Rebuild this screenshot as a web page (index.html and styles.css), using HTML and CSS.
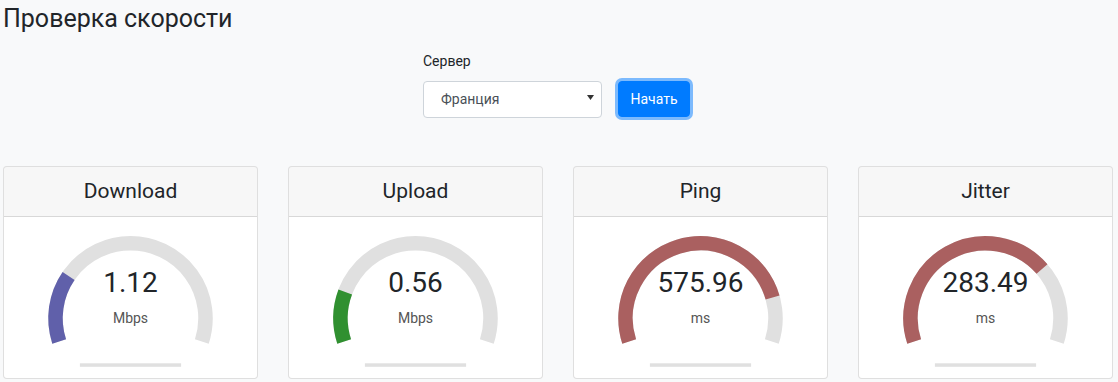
FILE: index.html
```
<!DOCTYPE html>
<html lang="ru">
<head>
<meta charset="utf-8">
<title>Проверка скорости</title>
<link rel="stylesheet" href="styles.css">
</head>
<body>
<div class="page">
  <h1 class="title">Проверка скорости</h1>
  <div class="controls">
    <div class="field">
      <label class="label">Сервер</label>
      <div class="select">
        <span class="select-text">Франция</span>
        <svg class="select-arrow" width="7" height="5" viewBox="0 0 7 5"><path d="M0 0H7L3.5 5Z" fill="#333"/></svg>
      </div>
    </div>
    <button class="btn">Начать</button>
  </div>
  <div class="cards">
    <div class="card">
      <div class="card-header">Download</div>
      <div class="card-body">
        <svg class="gauge" width="253" height="161" viewBox="0 0 253 161">
          <path d="M55.17 124.48 A75 75 0 1 1 197.83 124.48" class="arc-bg"/>
          <path d="M55.17 124.48 A75 75 0 0 1 64.58 58.97" stroke="#6060AA" class="arc-fg"/>
          <rect x="75.9" y="146.3" width="101.2" height="3.5" class="bar"/>
        </svg>
        <div class="readout"><div class="value">1.12</div><div class="unit">Mbps</div></div>
      </div>
    </div>
    <div class="card">
      <div class="card-header">Upload</div>
      <div class="card-body">
        <svg class="gauge" width="253" height="161" viewBox="0 0 253 161">
          <path d="M55.17 124.48 A75 75 0 1 1 197.83 124.48" class="arc-bg"/>
          <path d="M55.17 124.48 A75 75 0 0 1 56.25 75.02" stroke="#309030" class="arc-fg"/>
          <rect x="75.9" y="146.3" width="101.2" height="3.5" class="bar"/>
        </svg>
        <div class="readout"><div class="value">0.56</div><div class="unit">Mbps</div></div>
      </div>
    </div>
    <div class="card">
      <div class="card-header">Ping</div>
      <div class="card-body">
        <svg class="gauge" width="253" height="161" viewBox="0 0 253 161">
          <path d="M55.17 124.48 A75 75 0 1 1 197.83 124.48" class="arc-bg"/>
          <path d="M55.17 124.48 A75 75 0 1 1 198.57 80.55" stroke="#AA6060" class="arc-fg"/>
          <rect x="75.9" y="146.3" width="101.2" height="3.5" class="bar"/>
        </svg>
        <div class="readout"><div class="value">575.96</div><div class="unit">ms</div></div>
      </div>
    </div>
    <div class="card">
      <div class="card-header">Jitter</div>
      <div class="card-body">
        <svg class="gauge" width="253" height="161" viewBox="0 0 253 161">
          <path d="M55.17 124.48 A75 75 0 1 1 197.83 124.48" class="arc-bg"/>
          <path d="M55.17 124.48 A75 75 0 0 1 183.02 51.99" stroke="#AA6060" class="arc-fg"/>
          <rect x="75.9" y="146.3" width="101.2" height="3.5" class="bar"/>
        </svg>
        <div class="readout"><div class="value">283.49</div><div class="unit">ms</div></div>
      </div>
    </div>
  </div>
</div>
</body>
</html>
```
FILE: styles.css
```
* { box-sizing: border-box; }
html, body {
  margin: 0;
  padding: 0;
  background: #f8f9fa;
  font-family: Roboto, "Liberation Sans", Arial, sans-serif;
  color: #212529;
}
.page {
  padding: 3.8px 5px 0 3px;
}
.title {
  margin: 0;
  font-size: 25px;
  font-weight: 400;
  line-height: 30px;
}
.controls {
  display: flex;
  justify-content: center;
  align-items: flex-end;
  gap: 16px;
  margin-top: 17.6px;
  padding-right: 3px;
}
.field {
  display: flex;
  flex-direction: column;
}
.label {
  font-size: 14px;
  line-height: 21px;
  margin-bottom: 8.6px;
  color: #212529;
}
.select {
  width: 179px;
  height: 37px;
  background: #fff;
  border: 1px solid #ced4da;
  border-radius: 4px;
  display: flex;
  align-items: center;
  justify-content: space-between;
  padding: 0 7px 0 17px;
  font-size: 14px;
  color: #495057;
}
.select-arrow { display: block; margin-top: -3px; }
.btn {
  width: 72px;
  height: 36px;
  margin-bottom: 0.5px;
  border: 1px solid #007bff;
  border-radius: 4px;
  background: #007bff;
  color: #fff;
  font-family: inherit;
  font-size: 14px;
  box-shadow: 0 0 0 3px rgba(0, 123, 255, 0.5);
  padding: 0;
}
.cards {
  display: flex;
  gap: 30px;
  margin-top: 48px;
}
.card {
  flex: 0 0 255px;
  background: #fff;
  border: 1px solid rgba(0, 0, 0, 0.125);
  border-radius: 4px;
  overflow: hidden;
}
.card-header {
  background: rgba(0, 0, 0, 0.03);
  border-bottom: 1px solid rgba(0, 0, 0, 0.125);
  padding: 12px;
  font-size: 21px;
  line-height: 25px;
  text-align: center;
}
.card-body {
  display: grid;
}
.gauge, .readout {
  grid-area: 1 / 1;
}
.gauge { display: block; }
.arc-bg {
  fill: none;
  stroke: #e0e0e0;
  stroke-width: 14.5;
}
.arc-fg {
  fill: none;
  stroke-width: 14.5;
}
.bar { fill: #e0e0e0; }
.readout {
  text-align: center;
  padding-top: 51.7px;
}
.value {
  font-size: 28px;
  line-height: 28px;
  color: #212529;
}
.unit {
  margin-top: 14.8px;
  font-size: 14px;
  line-height: 14px;
  color: #555;
}
```
